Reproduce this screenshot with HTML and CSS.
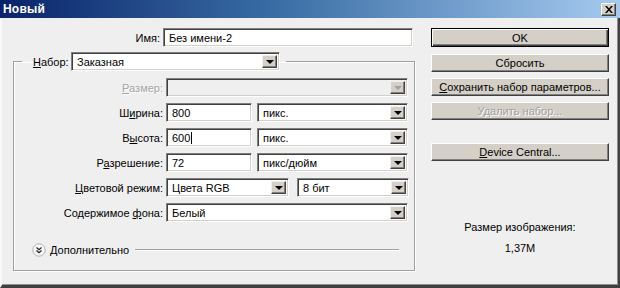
FILE: index.html
```html
<!DOCTYPE html>
<html lang="ru">
<head>
<meta charset="utf-8">
<title>Новый</title>
<link rel="stylesheet" href="styles.css">
</head>
<body>
<div class="window">
  <div class="titlebar">
    <span class="title">Новый</span>
    <span class="close"><svg width="8" height="7" viewBox="0 0 8 7"><path d="M0 0h2l2 2.5L6 0h2L5 3.5 8 7H6L4 4.5 2 7H0l3-3.5z" fill="#000"/></svg></span>
  </div>
  <div class="content">
    <div class="left">
      <div class="row name-row">
        <span class="lbl">Имя:</span>
        <div class="field w-name">Без имени-2</div>
      </div>
      <fieldset class="group">
        <legend class="legend">
          <span class="lbl-inline"><u>Н</u>абор:</span>
          <div class="field select w-preset">Заказная<span class="arrow"><i></i></span></div>
        </legend>
        <div class="row">
          <span class="lbl lbl-in disabled"><u>Р</u>азмер:</span>
          <div class="field select disabled-field w-full"><span class="arrow off"><i></i></span></div>
        </div>
        <div class="row">
          <span class="lbl lbl-in">Ш<u>и</u>рина:</span>
          <div class="field w-num">800</div>
          <div class="field select w-unit">пикс.<span class="arrow"><i></i></span></div>
        </div>
        <div class="row">
          <span class="lbl lbl-in">В<u>ы</u>сота:</span>
          <div class="field w-num">600<span class="caret"></span></div>
          <div class="field select w-unit">пикс.<span class="arrow"><i></i></span></div>
        </div>
        <div class="row">
          <span class="lbl lbl-in">Р<u>а</u>зрешение:</span>
          <div class="field w-num">72</div>
          <div class="field select w-unit">пикс/дюйм<span class="arrow"><i></i></span></div>
        </div>
        <div class="row">
          <span class="lbl lbl-in"><u>Ц</u>ветовой режим:</span>
          <div class="field select w-mode">Цвета RGB<span class="arrow"><i></i></span></div>
          <div class="field select w-bits">8 бит<span class="arrow"><i></i></span></div>
        </div>
        <div class="row">
          <span class="lbl lbl-in">Содержимое <u>ф</u>она:</span>
          <div class="field select w-full">Белый<span class="arrow"><i></i></span></div>
        </div>
        <div class="more">
          <svg class="more-icon" width="14" height="14" viewBox="0 0 14 14">
            <circle cx="7" cy="7" r="6.2" fill="#f7f7f7" stroke="#b0b0b0" stroke-width="1"/>
            <path d="M4.5 4.5L7 6.8 9.5 4.5M4.5 7.5L7 9.8 9.5 7.5" fill="none" stroke="#222" stroke-width="1.2"/>
          </svg>
          <span class="more-text">Дополнительно</span>
          <span class="more-line"></span>
        </div>
      </fieldset>
    </div>
    <div class="right">
      <div class="btn default"><span>OK</span></div>
      <div class="btn b-reset">Сбросить</div>
      <div class="btn b-save"><u>С</u>охранить набор параметров...</div>
      <div class="btn b-del disabled-btn">Удалить набор...</div>
      <div class="btn b-dev"><u>D</u>evice Central...</div>
      <div class="info">
        <div class="info-label">Размер изображения:</div>
        <div class="info-value">1,37M</div>
      </div>
    </div>
  </div>
</div>
</body>
</html>
```

FILE: styles.css
```css
* { box-sizing: border-box; }
html, body { margin: 0; padding: 0; }
body {
  width: 620px;
  height: 288px;
  overflow: hidden;
  font-family: "Liberation Sans", Arial, sans-serif;
  font-size: 11px;
  color: #000;
  background: #efefef;
}
u { text-decoration: underline; text-underline-offset: 1px; }

.window {
  width: 620px;
  height: 288px;
  display: flex;
  flex-direction: column;
}

.titlebar {
  height: 18px;
  flex: none;
  display: flex;
  align-items: center;
  justify-content: space-between;
  background: linear-gradient(to right, #0a246a 0%, #3a6ea5 45%, #a6caf0 100%);
  padding: 0 4px 0 3px;
}
.title {
  color: #fff;
  font-weight: bold;
  font-size: 12px;
  letter-spacing: 0.2px;
}
.close {
  width: 15px;
  height: 13px;
  background: #d4d0c8;
  border-top: 1px solid #fff;
  border-left: 1px solid #fff;
  border-right: 1px solid #404040;
  border-bottom: 1px solid #404040;
  box-shadow: inset -1px -1px 0 #808080;
  display: flex;
  align-items: center;
  justify-content: center;
  margin-top: 1px;
}

.content {
  flex: 1;
  display: flex;
  background: #efefef;
  border-left: 2px solid #f8f8f8;
  border-right: 2px solid #404040;
  border-bottom: 3px solid #404040;
  box-shadow: inset -1px -1px 0 #909090;
  padding-top: 10px;
}

.left {
  width: 414px;
  flex: none;
}

.row {
  display: flex;
  align-items: center;
  height: 19px;
  margin-bottom: 6px;
}
.name-row { margin-bottom: 5px; }

.lbl {
  width: 161px;
  text-align: right;
  padding-right: 3px;
  flex: none;
}
.lbl-in { width: 152px; }
.disabled {
  color: #a3a3a3;
  text-shadow: 1px 1px 0 #fff;
}

.field {
  height: 19px;
  background: #fff;
  border-top: 1px solid #808080;
  border-left: 1px solid #808080;
  border-right: 1px solid #fff;
  border-bottom: 1px solid #fff;
  box-shadow: inset 1px 1px 0 #404040, inset -1px -1px 0 #d4d0c8;
  padding-left: 5px;
  display: flex;
  align-items: center;
  flex: none;
  position: relative;
  white-space: nowrap;
}
.select { padding-right: 18px; }
.disabled-field { background: #efefef; }

.arrow {
  position: absolute;
  right: 2px;
  top: 2px;
  width: 15px;
  height: 13px;
  background: #d4d0c8;
  border-top: 1px solid #f0f0f0;
  border-left: 1px solid #f0f0f0;
  border-right: 1px solid #404040;
  border-bottom: 1px solid #404040;
  box-shadow: inset -1px -1px 0 #808080;
  display: flex;
  align-items: center;
  justify-content: center;
}
.arrow i {
  width: 0;
  height: 0;
  border-left: 4px solid transparent;
  border-right: 4px solid transparent;
  border-top: 4px solid #000;
  margin-top: 1px;
}
.arrow.off i { border-top-color: #a0a0a0; }

.caret {
  display: inline-block;
  width: 1px;
  height: 12px;
  background: #000;
  margin-left: 1px;
}

.w-name { width: 250px; }
.w-preset { width: 209px; }
.w-full { width: 242px; }
.w-num { width: 86px; }
.w-unit { width: 151px; margin-left: 5px; }
.w-mode { width: 123px; }
.w-bits { width: 112px; margin-left: 8px; }

.group {
  margin: 0 0 0 11px;
  padding: 7px 0 14px 0;
  width: 402px;
  height: 219px;
  border: 1px solid #a0a0a0;
  box-shadow: inset 1px 1px 0 #fff, 1px 1px 0 #fff;
  min-width: 0;
}
.legend {
  margin-left: 8px;
  padding: 0 6px 0 11px;
  display: flex;
  align-items: center;
  height: 19px;
}
.lbl-inline { width: 38px; flex: none; }

.more {
  display: flex;
  align-items: center;
  height: 14px;
  margin-top: 21px;
  padding-left: 18px;
}
.more-icon { flex: none; }
.more-text { margin-left: 4px; }
.more-line {
  flex: none;
  width: 264px;
  height: 2px;
  margin-left: 6px;
  border-top: 1px solid #a0a0a0;
  border-bottom: 1px solid #fff;
}

.right {
  margin-left: 15px;
  width: 178px;
  flex: none;
  display: flex;
  flex-direction: column;
}
.btn {
  height: 18px;
  flex: none;
  background: #d4d0c8;
  border-top: 1px solid #fff;
  border-left: 1px solid #fff;
  border-right: 1px solid #404040;
  border-bottom: 1px solid #404040;
  box-shadow: inset -1px -1px 0 #808080;
  display: flex;
  align-items: center;
  justify-content: center;
  white-space: nowrap;
}
.default {
  height: 19px;
  border: 1px solid #000;
  box-shadow: inset 1px 1px 0 #fff, inset -1px -1px 0 #404040, inset -2px -2px 0 #808080;
}
.b-reset { margin-top: 7px; }
.b-save { margin-top: 6px; }
.b-del { margin-top: 6px; }
.b-dev { margin-top: 23px; }
.disabled-btn {
  color: #a0a0a0;
  text-shadow: 1px 1px 0 #fff;
}

.info {
  margin-top: 60px;
  text-align: center;
  line-height: 13px;
}
.info-value { margin-top: 8px; }
```
